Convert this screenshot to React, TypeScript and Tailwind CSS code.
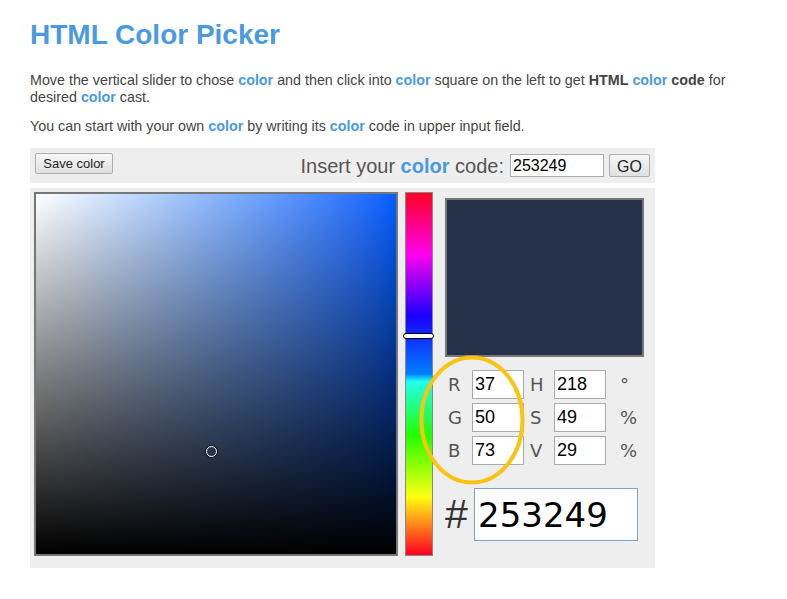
const C = () => <span className="font-bold text-[#4a9ae0]">color</span>;

const inputCls =
  "h-[29px] w-[52px] border border-[#aaa] bg-white px-[2px] font-['Liberation_Sans',Arial,sans-serif] text-[18px] text-black outline-none";

const Row = ({ a, b }: { a: [string, string]; b: [string, string, string] }) => (
  <div className="flex h-[29px] items-center">
    <span className="w-[27px] pl-[3px] font-['DejaVu_Sans',sans-serif] text-[18px] leading-[29px] text-[#555]">{a[0]}</span>
    <input readOnly value={a[1]} className={inputCls} />
    <span className="w-[30px] pl-[6px] font-['DejaVu_Sans',sans-serif] text-[18px] leading-[29px] text-[#555]">{b[0]}</span>
    <input readOnly value={b[1]} className={inputCls} />
    <span className="pl-[14px] font-['DejaVu_Sans',sans-serif] text-[18px] leading-[29px] text-[#555]">{b[2]}</span>
  </div>
);

export default function App() {
  return (
    <div className="relative min-h-[599px] bg-white px-[30px] font-['Liberation_Sans',Arial,sans-serif] text-[#444]">
      <h1 className="pt-[19px] text-[28px] font-bold leading-[32px] text-[#4a9ae0]">HTML Color Picker</h1>
      <p className="mt-[21px] max-w-[720px] text-[14.3px] leading-[17px]">
        Move the vertical slider to chose <C /> and then click into <C /> square on the left to get{" "}
        <b>HTML</b> <C /> <b>code</b> for desired <C /> cast.
      </p>
      <p className="mt-[12px] text-[14.3px] leading-[17px]">
        You can start with your own <C /> by writing its <C /> code in upper input field.
      </p>

      {/* toolbar */}
      <div className="mt-[13px] flex h-[35px] w-[625px] items-center justify-between bg-[#eee] px-[5px]">
        <button className="mb-[4px] h-[21px] w-[78px] rounded-[2px] border border-[#adadad] bg-linear-to-b from-[#f7f7f7] to-[#e0e0e0] text-[13px] text-[#222]">
          Save color
        </button>
        <div className="flex items-center">
          <span className="text-[20px] text-[#555]">
            Insert your <C /> code:
          </span>
          <input
            readOnly
            value="253249"
            className="ml-[6px] h-[23px] w-[94px] border border-[#aaa] bg-white px-[2px] text-[16px] text-black outline-none"
          />
          <button className="ml-[5px] h-[23px] w-[41px] rounded-[2px] border border-[#adadad] bg-linear-to-b from-[#f7f7f7] to-[#e0e0e0] text-[16px] text-[#222]">
            GO
          </button>
        </div>
      </div>

      {/* picker */}
      <div className="mt-[5px] flex w-[625px] items-start bg-[#eee] pb-[12px] pl-[4px] pt-[4px]">
        <div className="relative h-[364px] w-[364px] border-2 border-[#777] bg-linear-to-r from-white to-[#005dff]">
          <div className="h-full w-full bg-linear-to-t from-black to-transparent" />
          <div className="absolute left-[170px] top-[252px] h-[11px] w-[11px] rounded-full border-[1.5px] border-white shadow-[0_0_0_1px_rgba(0,0,0,0.6)]" />
        </div>
        <div className="relative ml-[7px] h-[364px] w-[28px] border border-[#888] bg-[linear-gradient(to_bottom,#ff0022,#ff00ee_17%,#1a00ff_34%,#0080ff_50%,#20ffee_52%,#22ff00_67%,#ffff10_84%,#ff0022)]">
          <div className="absolute left-[-3px] top-[140px] h-[6px] w-[31px] rounded-full border border-black bg-white" />
        </div>
        <div className="ml-[12px] mt-[6px] flex flex-col">
          <div className="h-[159px] w-[199px] border-2 border-[#777] bg-[#253249]" />
          <div className="mt-[13px] flex flex-col gap-[4px]">
            <Row a={["R", "37"]} b={["H", "218", "°"]} />
            <Row a={["G", "50"]} b={["S", "49", "%"]} />
            <Row a={["B", "73"]} b={["V", "29", "%"]} />
          </div>
          <div className="mt-[23px] flex items-center">
            <span className="w-[29px] text-[41px] leading-[53px] text-[#333]">#</span>
            <input
              readOnly
              value="253249"
              className="h-[53px] w-[164px] border border-[#7da2ce] bg-white pl-[3px] font-['DejaVu_Sans',sans-serif] text-[34px] text-black outline-none"
            />
          </div>
        </div>
      </div>

      {/* highlight ring */}
      <svg className="pointer-events-none absolute left-[417px] top-[353px]" width="110" height="134" viewBox="0 0 110 134">
        <ellipse cx="55" cy="67" rx="50.5" ry="62.5" fill="none" stroke="#fbc312" strokeWidth="4" />
      </svg>
    </div>
  );
}
